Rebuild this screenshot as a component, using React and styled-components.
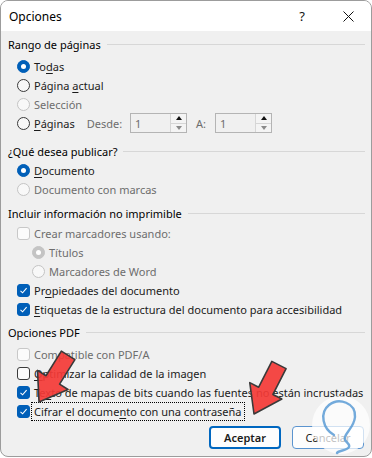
import React from "react";
import styled, { createGlobalStyle } from "styled-components";

const GlobalStyle = createGlobalStyle`
  html, body {
    margin: 0;
    padding: 0;
    background: #ffffff;
  }
  body {
    font-family: "Noto Sans", "Open Sans", sans-serif;
    font-size: 11px;
    color: #1b1b1b;
  }
`;

const Window = styled.div`
  position: relative;
  width: 372px;
  height: 457px;
  box-sizing: border-box;
  border: 1px solid #9c9c9c;
  border-radius: 8px;
  background: #f0f0f0;
  overflow: hidden;
  display: flex;
  flex-direction: column;
`;

const TitleBar = styled.div`
  height: 30px;
  flex-shrink: 0;
  background: #ffffff;
  display: flex;
  align-items: center;
  padding-left: 8px;
`;

const Title = styled.div`
  flex: 1;
  font-size: 12px;
  color: #000;
`;

const TitleButton = styled.div`
  width: 46px;
  height: 30px;
  display: flex;
  align-items: center;
  justify-content: center;
  font-size: 13px;
  color: #111;
`;

const Body = styled.div`
  flex: 1;
  display: flex;
  flex-direction: column;
  padding: 4px 6px 0 7px;
`;

const Section = styled.div`
  display: flex;
  flex-direction: column;
  margin-top: ${({ top }) => top || 0}px;
`;

const Header = styled.div`
  height: 18px;
  display: flex;
  align-items: center;
  color: #000;
  margin-bottom: ${({ gap }) => gap || 0}px;
  &::after {
    content: "";
    flex: 1;
    height: 1px;
    background: #d7d7d7;
    margin-left: 6px;
  }
`;

const Row = styled.div`
  height: 19px;
  display: flex;
  align-items: center;
  padding-left: ${({ indent }) => indent || 9}px;
  color: ${({ disabled }) => (disabled ? "#6d6d6d" : "#1b1b1b")};
  white-space: nowrap;
`;

const Radio = styled.span`
  width: 13px;
  height: 13px;
  box-sizing: border-box;
  border-radius: 50%;
  flex-shrink: 0;
  margin-right: 4px;
  display: flex;
  align-items: center;
  justify-content: center;
  border: 1px solid
    ${({ on, disabled }) => (disabled ? "#c4c4c4" : on ? "#005fb8" : "#3a3a3a")};
  background: ${({ on, disabled }) =>
    on ? (disabled ? "#c4c4c4" : "#005fb8") : "#f8f8f8"};
  &::after {
    content: "";
    display: ${({ on }) => (on ? "block" : "none")};
    width: 5px;
    height: 5px;
    border-radius: 50%;
    background: #ffffff;
  }
`;

const Check = styled.span`
  width: 13px;
  height: 13px;
  box-sizing: border-box;
  border-radius: 3px;
  flex-shrink: 0;
  margin-right: 4px;
  display: flex;
  align-items: center;
  justify-content: center;
  border: 1px solid
    ${({ on, disabled }) => (disabled ? "#c8c8c8" : on ? "#005fb8" : "#3a3a3a")};
  background: ${({ on }) => (on ? "#005fb8" : "#fbfbfb")};
`;

const Key = styled.span`
  text-decoration: underline;
  text-underline-offset: 2px;
`;

const Focus = styled.span`
  outline: 1px dotted #000;
  padding: 1px 2px;
  margin-left: -2px;
`;

const Label = styled.span`
  color: #6d6d6d;
  margin-left: ${({ left }) => left}px;
  margin-right: ${({ right }) => right}px;
`;

const Spinner = styled.div`
  width: ${({ w }) => w}px;
  height: 20px;
  box-sizing: border-box;
  border: 1px solid #b4b4b4;
  background: #f0f0f0;
  display: flex;
`;

const SpinValue = styled.div`
  flex: 1;
  display: flex;
  align-items: center;
  padding-left: 4px;
  color: #6d6d6d;
`;

const SpinButtons = styled.div`
  width: 15px;
  display: flex;
  flex-direction: column;
  border-left: 1px solid #d6d6d6;
`;

const SpinButton = styled.div`
  flex: 1;
  display: flex;
  align-items: center;
  justify-content: center;
  background: #f4f4f4;
  border-bottom: ${({ top }) => (top ? "1px solid #d6d6d6" : "none")};
  &::after {
    content: "";
    border-left: 3.5px solid transparent;
    border-right: 3.5px solid transparent;
    ${({ top }) =>
      top
        ? "border-bottom: 4px solid #111;"
        : "border-top: 4px solid #8a8a8a;"}
  }
`;

const Footer = styled.div`
  display: flex;
  justify-content: flex-end;
  gap: 11px;
  margin-top: 5px;
  padding-right: 1px;
`;

const Button = styled.div`
  width: 72px;
  height: 23px;
  box-sizing: border-box;
  border-radius: 4px;
  display: flex;
  align-items: center;
  justify-content: center;
  background: #fdfdfd;
  color: #1b1b1b;
  font-weight: ${({ primary }) => (primary ? 600 : 400)};
  border: ${({ primary }) =>
    primary ? "2px solid #0067c0" : "1px solid #5b94cf"};
`;

const Overlay = styled.svg`
  position: absolute;
  left: 0;
  top: 0;
  width: 372px;
  height: 457px;
  pointer-events: none;
`;

const CheckMark = () => (
  <svg width="9" height="9" viewBox="0 0 9 9">
    <path d="M1.5 4.8 L3.6 6.8 L7.6 2.2" fill="none" stroke="#fff" strokeWidth="1.1" />
  </svg>
);

const SpinBox = ({ w }) => (
  <Spinner w={w}>
    <SpinValue>1</SpinValue>
    <SpinButtons>
      <SpinButton top />
      <SpinButton />
    </SpinButtons>
  </Spinner>
);

const Arrow = ({ x, y, angle }) => (
  <g transform={`translate(${x} ${y}) rotate(${angle})`}>
    <polygon
      points="0,0 18,-26 8,-26 8,-55 -8,-55 -8,-26 -18,-26"
      fill="#f43a36"
      fillOpacity="0.92"
      stroke="#3a3a3a"
      strokeWidth="1.6"
      strokeLinejoin="round"
    />
  </g>
);

const App = () => {
  return (
    <>
      <GlobalStyle />
      <Window>
        <TitleBar>
          <Title>Opciones</Title>
          <TitleButton>?</TitleButton>
          <TitleButton>
            <svg width="11" height="11" viewBox="0 0 11 11">
              <path d="M0.5 0.5 L10.5 10.5 M10.5 0.5 L0.5 10.5" stroke="#111" strokeWidth="1" />
            </svg>
          </TitleButton>
        </TitleBar>
        <Body>
          <Section>
            <Header gap={3.5}>Rango de páginas</Header>
            <Row>
              <Radio on />
              <span>
                To<Key>d</Key>as
              </span>
            </Row>
            <Row>
              <Radio />
              <span>
                Página <Key>a</Key>ctual
              </span>
            </Row>
            <Row disabled>
              <Radio disabled />
              Selección
            </Row>
            <Row>
              <Radio />
              <span>
                <Key>P</Key>áginas
              </span>
              <Label left={12} right={8}>Desde:</Label>
              <SpinBox w={57} />
              <Label left={9} right={9}>A:</Label>
              <SpinBox w={57} />
            </Row>
          </Section>

          <Section top={10}>
            <Header gap={0.5}>¿Qué desea publicar?</Header>
            <Row>
              <Radio on />
              <span>
                <Key>D</Key>ocumento
              </span>
            </Row>
            <Row disabled>
              <Radio disabled />
              Documento con marcas
            </Row>
          </Section>

          <Section top={5.5}>
            <Header gap={1.5}>Incluir información no imprimible</Header>
            <Row disabled>
              <Check disabled />
              Crear marcadores usando:
            </Row>
            <Row disabled indent={24}>
              <Radio on disabled />
              Títulos
            </Row>
            <Row disabled indent={24}>
              <Radio disabled />
              Marcadores de Word
            </Row>
            <Row>
              <Check on>
                <CheckMark />
              </Check>
              <span>
                Pr<Key>o</Key>piedades del documento
              </span>
            </Row>
            <Row>
              <Check on>
                <CheckMark />
              </Check>
              <span>
                <Key>E</Key>tiquetas de la estructura del documento para accesibilidad
              </span>
            </Row>
          </Section>

          <Section top={4}>
            <Header gap={3.5}>Opciones PDF</Header>
            <Row disabled>
              <Check disabled />
              Compatible con PDF/A
            </Row>
            <Row>
              <Check />
              <span>
                <Key>O</Key>ptimizar la calidad de la imagen
              </span>
            </Row>
            <Row>
              <Check on>
                <CheckMark />
              </Check>
              <span>
                Te<Key>x</Key>to de mapas de bits cuando las fuentes no están incrustadas
              </span>
            </Row>
            <Row>
              <Check on>
                <CheckMark />
              </Check>
              <Focus>
                Cifrar el docume<Key>n</Key>to con una contraseña
              </Focus>
            </Row>
          </Section>

          <Footer>
            <Button primary>Aceptar</Button>
            <Button>Cancelar</Button>
          </Footer>
        </Body>

        <Overlay viewBox="0 0 372 457">
          <Arrow x={38} y={401} angle={32} />
          <Arrow x={253} y={413} angle={27} />
          <circle cx="340" cy="424" r="29" fill="#ffffff" fillOpacity="0.72" />
          <path
            d="M333 434 C322 428 318 412 328 404 C338 396 355 402 354 416 C353 426 346 430 344 436 C342 441 350 442 348 446 C346 450 338 449 336 452"
            fill="none"
            stroke="#5b9bd5"
            strokeOpacity="0.85"
            strokeWidth="2.4"
            strokeLinecap="round"
          />
        </Overlay>
      </Window>
    </>
  );
};

export default App;
